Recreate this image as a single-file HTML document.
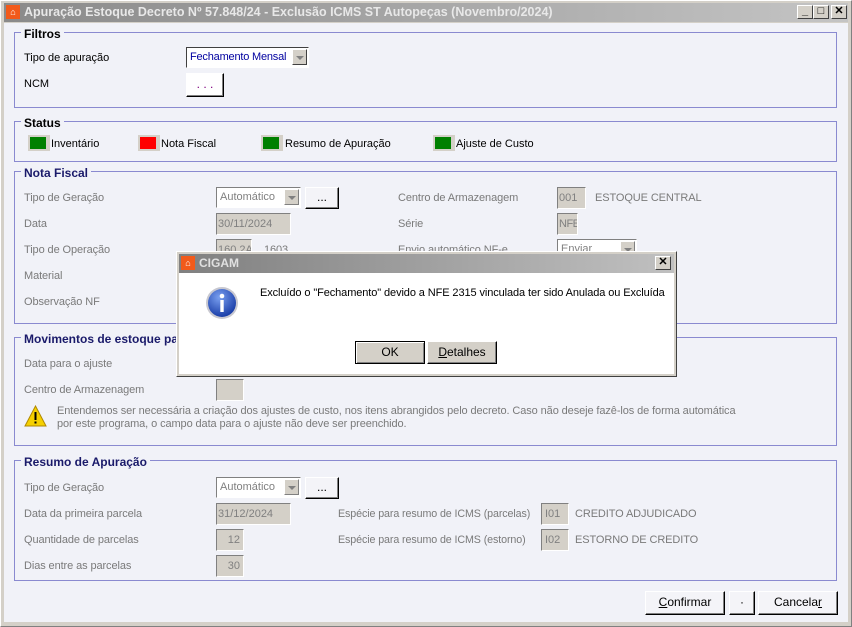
<!DOCTYPE html>
<html><head><meta charset="utf-8"><style>
*{box-sizing:border-box;margin:0;padding:0}
body{width:852px;height:627px;overflow:hidden;background:#d4d0c8;font-family:"Liberation Sans",sans-serif;font-size:11px;position:relative}
.a{position:absolute;white-space:nowrap}
.win{left:0;top:0;width:852px;height:627px;border:1px solid #808080;border-top-color:#fff;border-left-color:#fff;background:#d4d0c8}
.title{left:4px;top:3px;width:844px;height:19px;background:linear-gradient(to right,#8a8a8a,#c4c4c4)}
.client{left:4px;top:23px;width:844px;height:599px;background:#f1f2f8}
.g{position:absolute;border:1px solid #8a8ad0}
.gt{position:absolute;font-weight:bold;font-size:12px;background:#f1f2f8;padding:0 3px}
.l{color:#7a7a7a;font-size:11px;letter-spacing:-0.1px}
.k{color:#000;font-size:11px}
.in{position:absolute;background:#d4d0c8;border:1px solid;border-color:#808080 #fff #fff #808080;color:#808080;font-size:11px;padding:3px 1px;line-height:14px;overflow:hidden}
.cb{position:absolute;background:#fff;border:1px solid;border-color:#808080 #fff #fff #808080;color:#808080;font-size:11px;padding:2px 3px;line-height:14px;overflow:hidden}
.cb i{position:absolute;right:1px;top:1px;width:15px;height:16px;background:#d4d0c8;border:1px solid;border-color:#fff #808080 #808080 #fff}
.cb i:after{content:"";position:absolute;left:3px;top:6px;border:4px solid transparent;border-top:4px solid #808080;border-bottom:0}
.bt{position:absolute;background:#f4f4f8;border:1px solid;border-color:#fff #000 #000 #fff;box-shadow:inset -1px -1px #808080;text-align:center;font-size:12px;line-height:20px}
.sw{position:absolute;width:22px;height:16px;background:#d4d0c8}
.sw b{position:absolute;left:2px;top:2px;width:16px;height:12px}
.tb{position:absolute;width:16px;height:14px;background:#d4d0c8;border:1px solid;border-color:#fff #404040 #404040 #fff;font-size:11px;font-weight:bold;text-align:center;line-height:11px}
</style></head><body>
<div class="a win"></div>
<div class="a title"></div>
<div class="a" style="left:6px;top:5px;width:14px;height:14px;background:#f25a1a;color:#fff;font-size:9px;line-height:14px;text-align:center">⌂</div>
<div class="a" style="left:24px;top:5px;color:#e8e8e8;font-weight:bold;font-size:12.5px">Apuração Estoque Decreto Nº 57.848/24 - Exclusão ICMS ST Autopeças (Novembro/2024)</div>
<div class="tb" style="left:797px;top:5px">_</div>
<div class="tb" style="left:813px;top:5px">□</div>
<div class="tb" style="left:831px;top:5px">✕</div>
<div class="a client"></div>

<!-- Filtros -->
<div class="g" style="left:14px;top:32px;width:823px;height:76px"></div>
<div class="gt" style="left:21px;top:27px">Filtros</div>
<div class="a k" style="left:24px;top:52px">Tipo de apuração</div>
<div class="cb" style="left:186px;top:47px;width:123px;height:21px;color:#0000a0;border-color:#404040 #fff #fff #404040;letter-spacing:-0.2px">Fechamento Mensal<i style="background:#d4d0c8;border-color:#fff #404040 #404040 #fff"></i></div>
<div class="a k" style="left:24px;top:78px">NCM</div>
<div class="bt" style="left:186px;top:73px;width:38px;height:24px;color:#800080;background:#fff">. . .</div>

<!-- Status -->
<div class="g" style="left:14px;top:121px;width:823px;height:41px"></div>
<div class="gt" style="left:21px;top:116px">Status</div>
<div class="sw" style="left:28px;top:135px"><b style="background:#008000"></b></div><div class="a k" style="left:51px;top:138px">Inventário</div>
<div class="sw" style="left:138px;top:135px"><b style="background:#f00"></b></div><div class="a k" style="left:161px;top:138px">Nota Fiscal</div>
<div class="sw" style="left:261px;top:135px"><b style="background:#008000"></b></div><div class="a k" style="left:285px;top:138px">Resumo de Apuração</div>
<div class="sw" style="left:433px;top:135px"><b style="background:#008000"></b></div><div class="a k" style="left:456px;top:138px">Ajuste de Custo</div>

<!-- Nota Fiscal -->
<div class="g" style="left:14px;top:171px;width:823px;height:153px"></div>
<div class="gt" style="left:21px;top:166px;color:#1a1a6a">Nota Fiscal</div>
<div class="a l" style="left:24px;top:192px">Tipo de Geração</div>
<div class="cb" style="left:216px;top:187px;width:85px;height:21px">Automático<i></i></div>
<div class="bt" style="left:305px;top:187px;width:34px;height:22px;line-height:18px">...</div>
<div class="a l" style="left:24px;top:218px">Data</div>
<div class="in" style="left:216px;top:213px;width:75px;height:22px">30/11/2024</div>
<div class="a l" style="left:24px;top:244px">Tipo de Operação</div>
<div class="in" style="left:216px;top:239px;width:36px;height:22px">160.2A</div>
<div class="a l" style="left:264px;top:244px">1603</div>
<div class="a l" style="left:24px;top:270px">Material</div>
<div class="a l" style="left:24px;top:296px">Observação NF</div>
<div class="a l" style="left:398px;top:192px">Centro de Armazenagem</div>
<div class="in" style="left:557px;top:187px;width:29px;height:22px">001</div>
<div class="a l" style="left:595px;top:192px">ESTOQUE CENTRAL</div>
<div class="a l" style="left:398px;top:218px">Série</div>
<div class="in" style="left:557px;top:213px;width:21px;height:22px;letter-spacing:-0.5px">NFE</div>
<div class="a l" style="left:398px;top:244px">Envio automático NF-e</div>
<div class="cb" style="left:557px;top:239px;width:80px;height:21px">Enviar<i></i></div>

<!-- Movimentos -->
<div class="g" style="left:14px;top:337px;width:823px;height:109px"></div>
<div class="gt" style="left:21px;top:332px;color:#1a1a6a">Movimentos de estoque para ajuste de custo</div>
<div class="a l" style="left:24px;top:358px">Data para o ajuste</div>
<div class="a l" style="left:24px;top:384px">Centro de Armazenagem</div>
<div class="in" style="left:216px;top:379px;width:28px;height:22px"></div>
<svg class="a" style="left:24px;top:405px" width="23" height="22"><path d="M11.5 1 L22 21 L1 21 Z" fill="#f5d000" stroke="#b08800"/><rect x="10.5" y="7" width="2" height="8" fill="#000"/><rect x="10.5" y="16.5" width="2" height="2" fill="#000"/></svg>
<div class="a l" style="left:57px;top:405px;font-size:11px;letter-spacing:-0.1px">Entendemos ser necessária a criação dos ajustes de custo, nos itens abrangidos pelo decreto. Caso não deseje fazê-los de forma automática</div>
<div class="a l" style="left:57px;top:418px;font-size:11px;letter-spacing:-0.1px">por este programa, o campo data para o ajuste não deve ser preenchido.</div>

<!-- Resumo -->
<div class="g" style="left:14px;top:460px;width:823px;height:121px"></div>
<div class="gt" style="left:21px;top:455px;color:#1a1a6a">Resumo de Apuração</div>
<div class="a l" style="left:24px;top:482px">Tipo de Geração</div>
<div class="cb" style="left:216px;top:477px;width:85px;height:21px">Automático<i></i></div>
<div class="bt" style="left:305px;top:477px;width:34px;height:22px;line-height:18px">...</div>
<div class="a l" style="left:24px;top:508px">Data da primeira parcela</div>
<div class="in" style="left:216px;top:503px;width:75px;height:22px">31/12/2024</div>
<div class="a l" style="left:24px;top:534px">Quantidade de parcelas</div>
<div class="in" style="left:216px;top:529px;width:28px;height:22px;text-align:right;padding-right:3px">12</div>
<div class="a l" style="left:24px;top:560px">Dias entre as parcelas</div>
<div class="in" style="left:216px;top:555px;width:28px;height:22px;text-align:right;padding-right:3px">30</div>
<div class="a l" style="left:338px;top:508px;font-size:10.7px">Espécie para resumo de ICMS (parcelas)</div>
<div class="in" style="left:541px;top:503px;width:28px;height:22px;padding-left:3px">I01</div>
<div class="a l" style="left:575px;top:508px">CREDITO ADJUDICADO</div>
<div class="a l" style="left:338px;top:534px;font-size:10.7px">Espécie para resumo de ICMS (estorno)</div>
<div class="in" style="left:541px;top:529px;width:28px;height:22px;padding-left:3px">I02</div>
<div class="a l" style="left:575px;top:534px">ESTORNO DE CREDITO</div>

<div class="bt" style="left:645px;top:591px;width:80px;height:24px"><u>C</u>onfirmar</div>
<div class="bt" style="left:729px;top:591px;width:26px;height:24px">·</div>
<div class="bt" style="left:758px;top:591px;width:80px;height:24px">Cancela<u>r</u></div>

<!-- Dialog -->
<div class="a" style="left:176px;top:251px;width:501px;height:126px;background:#d4d0c8;border:1px solid;border-color:#fff #404040 #404040 #fff"></div>
<div class="a" style="left:179px;top:254px;width:495px;height:19px;background:linear-gradient(to right,#808080,#c0c0c0)"></div>
<div class="a" style="left:181px;top:256px;width:14px;height:14px;background:#f25a1a;color:#fff;font-size:9px;line-height:14px;text-align:center">⌂</div>
<div class="a" style="left:199px;top:256px;color:#e0e0e0;font-weight:bold;font-size:12px">CIGAM</div>
<div class="tb" style="left:655px;top:256px">✕</div>
<div class="a" style="left:179px;top:273px;width:495px;height:101px;background:#fff"></div>
<svg class="a" style="left:205px;top:286px" width="34" height="34"><defs><radialGradient id="r" cx="40%" cy="30%" r="70%"><stop offset="0" stop-color="#7aa0f0"/><stop offset="1" stop-color="#1a3ea8"/></radialGradient></defs><circle cx="17" cy="17" r="16" fill="#c8c8d0"/><circle cx="17" cy="17" r="14" fill="url(#r)"/><circle cx="17" cy="10" r="2.3" fill="#fff"/><rect x="15.3" y="14" width="3.4" height="12" fill="#fff"/></svg>
<div class="a" style="left:260px;top:287px;font-size:11px;letter-spacing:-0.1px">Excluído o "Fechamento" devido a NFE 2315 vinculada ter sido Anulada ou Excluída</div>
<div class="bt" style="left:355px;top:341px;width:70px;height:23px;background:#d4d0c8;border-color:#000;border-width:1px;box-shadow:inset 1px 1px #fff,inset -1px -1px #808080">OK</div>
<div class="bt" style="left:427px;top:341px;width:70px;height:23px;background:#d4d0c8"><u>D</u>etalhes</div>
</body></html>
